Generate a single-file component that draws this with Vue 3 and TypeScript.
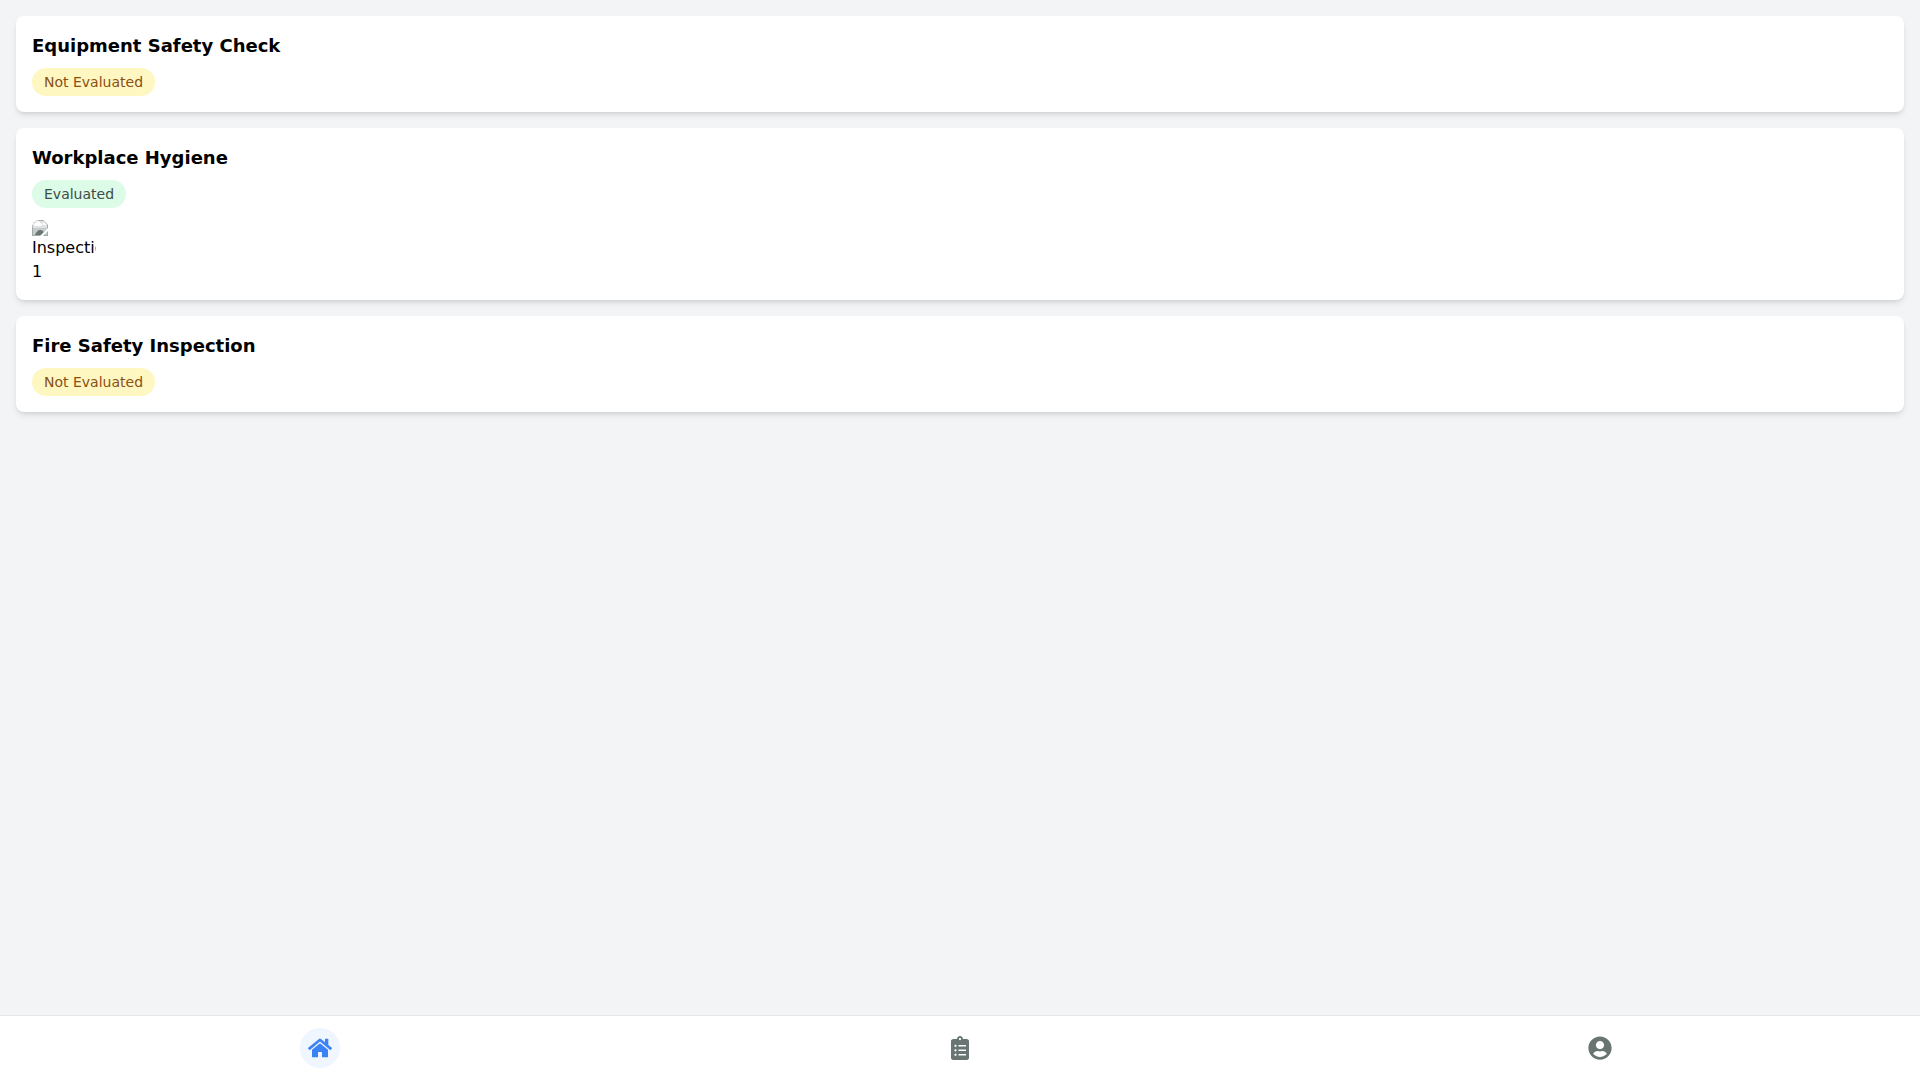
<script setup lang="ts">
import { ref } from 'vue'

interface Inspection {
  id: number
  title: string
  evaluated: boolean
  photos: string[]
}

interface Tab {
  id: string
  label: string
  viewBox: string
  path: string
}

const inspections: Inspection[] = [
  { id: 1, title: 'Equipment Safety Check', evaluated: false, photos: [] },
  { id: 2, title: 'Workplace Hygiene', evaluated: true, photos: ['Inspection 1'] },
  { id: 3, title: 'Fire Safety Inspection', evaluated: false, photos: [] },
]

const tabs: Tab[] = [
  {
    id: 'home',
    label: 'Home',
    viewBox: '0 0 576 512',
    path: 'M280.37 148.26L96 300.11V464a16 16 0 0 0 16 16l112.06-.29a16 16 0 0 0 15.92-16V368a16 16 0 0 1 16-16h64a16 16 0 0 1 16 16v95.64a16 16 0 0 0 16 16.05L464 480a16 16 0 0 0 16-16V300L295.67 148.26a12.19 12.19 0 0 0-15.3 0zM571.6 251.47L488 182.56V44.05a12 12 0 0 0-12-12h-56a12 12 0 0 0-12 12v72.61L318.47 43a48 48 0 0 0-61 0L4.34 251.47a12 12 0 0 0-1.6 16.9l25.5 31A12 12 0 0 0 45.15 301l235.22-193.74a12.19 12.19 0 0 1 15.3 0L530.9 301a12 12 0 0 0 16.9-1.6l25.5-31a12 12 0 0 0-1.7-16.93z',
  },
  {
    id: 'inspections',
    label: 'Inspections',
    viewBox: '0 0 384 512',
    path: 'M336 64h-80c0-35.3-28.7-64-64-64s-64 28.7-64 64H48C21.5 64 0 85.5 0 112v352c0 26.5 21.5 48 48 48h288c26.5 0 48-21.5 48-48V112c0-26.5-21.5-48-48-48zM96 424c-13.3 0-24-10.7-24-24s10.7-24 24-24 24 10.7 24 24-10.7 24-24 24zm0-96c-13.3 0-24-10.7-24-24s10.7-24 24-24 24 10.7 24 24-10.7 24-24 24zm0-96c-13.3 0-24-10.7-24-24s10.7-24 24-24 24 10.7 24 24-10.7 24-24 24zm96-192c13.3 0 24 10.7 24 24s-10.7 24-24 24-24-10.7-24-24 10.7-24 24-24zm128 368c0 4.4-3.6 8-8 8H168c-4.4 0-8-3.6-8-8v-16c0-4.4 3.6-8 8-8h144c4.4 0 8 3.6 8 8v16zm0-96c0 4.4-3.6 8-8 8H168c-4.4 0-8-3.6-8-8v-16c0-4.4 3.6-8 8-8h144c4.4 0 8 3.6 8 8v16zm0-96c0 4.4-3.6 8-8 8H168c-4.4 0-8-3.6-8-8v-16c0-4.4 3.6-8 8-8h144c4.4 0 8 3.6 8 8v16z',
  },
  {
    id: 'profile',
    label: 'Profile',
    viewBox: '0 0 496 512',
    path: 'M248 8C111 8 0 119 0 256s111 248 248 248 248-111 248-248S385 8 248 8zm0 96c48.6 0 88 39.4 88 88s-39.4 88-88 88-88-39.4-88-88 39.4-88 88-88zm0 344c-58.7 0-111.3-26.6-146.5-68.2 18.8-35.4 55.6-59.8 98.5-59.8 2.4 0 4.8.4 7.1 1.1 13 4.2 26.6 6.9 40.9 6.9 14.3 0 28-2.7 40.9-6.9 2.3-.7 4.7-1.1 7.1-1.1 42.9 0 79.7 24.4 98.5 59.8C359.3 421.4 306.7 448 248 448z',
  },
]

const activeTab = ref('home')
</script>

<template>
  <div class="page">
    <main class="list">
      <article v-for="item in inspections" :key="item.id" class="card">
        <h2 class="title">{{ item.title }}</h2>
        <span class="badge" :class="item.evaluated ? 'done' : 'pending'">{{
          item.evaluated ? 'Evaluated' : 'Not Evaluated'
        }}</span>
        <div v-if="item.photos.length" class="photos">
          <div v-for="photo in item.photos" :key="photo" class="photo">
            <svg class="missing" viewBox="0 0 16 16" aria-hidden="true">
              <path d="M0 0H11L16 5V16H0Z" fill="#a3a9a9" />
              <path d="M1 1H11V5H15V15H1Z" fill="#c6cacb" />
              <path d="M1 1H11V5H15V8H1Z" fill="#e0e3e6" />
              <path d="M3 6a1.500 1.500 0 0 1 1-3 2 2 0 0 1 4 0 1.500 1.500 0 0 1 1 3Z" fill="#fff" />
              <path d="M11 1V5H15Z" fill="#fff" />
              <path d="M3 15C4 12 6 10 8 10s4 1 5 5Z" fill="#6a7775" />
              <path d="M8 16L16 8V11L11 16Z" fill="#fff" />
            </svg>
            <span>{{ photo }}</span>
          </div>
        </div>
      </article>
    </main>

    <nav class="tabs" aria-label="Main">
      <div v-for="tab in tabs" :key="tab.id" class="slot">
        <button
          type="button"
          class="tab"
          :class="{ active: activeTab === tab.id }"
          :aria-label="tab.label"
          @click="activeTab = tab.id"
        >
          <svg class="icon" :viewBox="tab.viewBox" aria-hidden="true">
            <path :d="tab.path" fill="currentColor" />
          </svg>
        </button>
      </div>
    </nav>
  </div>
</template>

<style>
body {
  margin: 0;
  background: #f2f4f6;
}
</style>

<style scoped>
.page {
  display: flex;
  flex-direction: column;
  min-height: 100vh;
  background: #f2f4f6;
  color: #000;
  font-family: 'DejaVu Sans', sans-serif;
  font-size: 16px;
  line-height: 24px;
}

.list {
  flex: 1;
  display: flex;
  flex-direction: column;
  gap: 16px;
  padding: 16px;
}

.card {
  display: flex;
  flex-direction: column;
  align-items: flex-start;
  padding: 16px;
  border-radius: 8px;
  background: #fff;
  box-shadow:
    0 4px 6px -1px rgba(0, 0, 0, 0.1),
    0 2px 4px -2px rgba(0, 0, 0, 0.1);
}

.title {
  margin: 0 0 8px;
  font-size: 18px;
  line-height: 28px;
  font-weight: 700;
}

.badge {
  padding: 4px 12px;
  border-radius: 14px;
  font-size: 14px;
  line-height: 20px;
}

.pending {
  background: #fff7c2;
  color: #8a5012;
}

.done {
  background: #dcfce7;
  color: #414b49;
}

.photos {
  display: flex;
  gap: 8px;
  margin-top: 12px;
}

.photo {
  width: 64px;
  height: 64px;
  overflow: hidden;
  border-radius: 8px;
}

.missing {
  display: block;
  width: 16px;
  height: 16px;
}

.tabs {
  position: sticky;
  bottom: 0;
  display: flex;
  padding: 12px 0;
  border-top: 1px solid #e5e7eb;
  background: #fff;
}

.slot {
  flex: 1;
  display: flex;
  justify-content: center;
}

.tab {
  display: flex;
  align-items: center;
  justify-content: center;
  width: 40px;
  height: 40px;
  padding: 0;
  border: 0;
  border-radius: 50%;
  background: transparent;
  color: #687573;
  cursor: pointer;
}

.tab.active {
  background: #eff6ff;
  color: #3b82f6;
}

.icon {
  width: 24px;
  height: 24px;
}
</style>
